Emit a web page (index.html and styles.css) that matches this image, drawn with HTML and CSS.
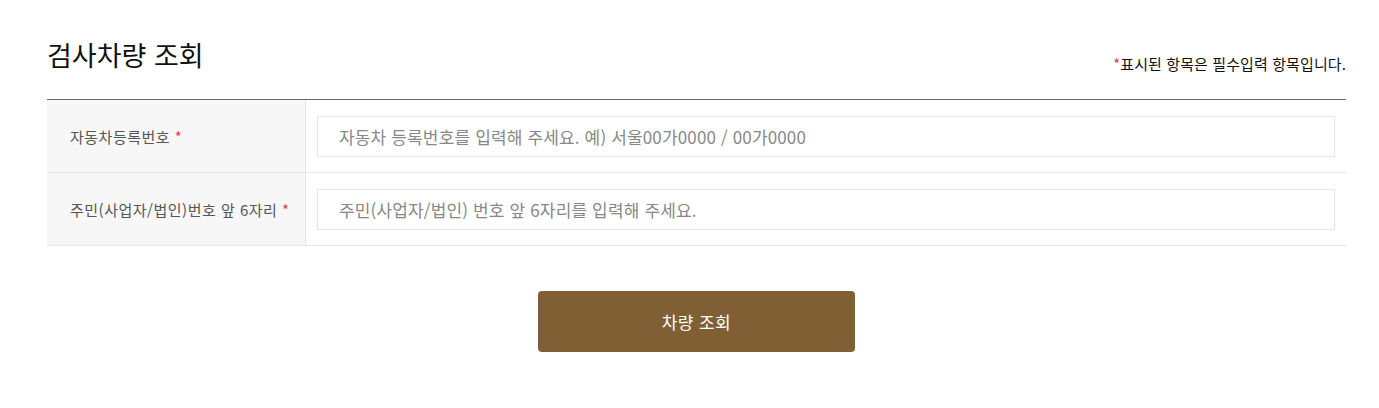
FILE: index.html
```html
<!DOCTYPE html>
<html lang="ko">
<head>
<meta charset="utf-8">
<title>검사차량 조회</title>
<link rel="stylesheet" href="styles.css">
</head>
<body>
<div class="wrap">
  <div class="head">
    <h2 class="title">검사차량 조회</h2>
    <p class="note"><span class="req">*</span>표시된 항목은 필수입력 항목입니다.</p>
  </div>
  <div class="form">
    <div class="row">
      <div class="label"><span>자동차등록번호 <span class="req">*</span></span></div>
      <div class="field"><input class="input" type="text" placeholder="자동차 등록번호를 입력해 주세요. 예) 서울00가0000 / 00가0000"></div>
    </div>
    <div class="row">
      <div class="label"><span>주민(사업자/법인)번호 앞 6자리 <span class="req">*</span></span></div>
      <div class="field"><input class="input" type="text" placeholder="주민(사업자/법인) 번호 앞 6자리를 입력해 주세요."></div>
    </div>
  </div>
  <div class="actions">
    <button class="btn" type="button">차량 조회</button>
  </div>
</div>
</body>
</html>
```
FILE: styles.css
```css
html, body {
  margin: 0;
  padding: 0;
  background: #fff;
}
body {
  font-family: "Noto Sans CJK KR", "Noto Sans", sans-serif;
  color: #222;
}
.wrap {
  padding: 0 33px 0 47px;
}
.head {
  display: flex;
  justify-content: space-between;
  align-items: flex-end;
  height: 99px;
  box-sizing: border-box;
  padding-bottom: 26px;
}
.title {
  margin: 0;
  font-size: 27px;
  font-weight: 400;
  line-height: 36px;
  color: #111;
  letter-spacing: 0;
}
.note {
  margin: 0;
  font-size: 15px;
  line-height: 18px;
  color: #111;
  letter-spacing: 0.1px;
}
.req {
  color: #e0404a;
}
.form {
  border-top: 1px solid #666;
}
.row {
  display: flex;
  border-bottom: 1px solid #e5e5e5;
}
.label {
  width: 259px;
  flex: none;
  background: #f7f7f7;
  border-right: 1px solid #e5e5e5;
  display: flex;
  align-items: center;
  padding-left: 23px;
  box-sizing: border-box;
  font-size: 15px;
  color: #555;
  letter-spacing: 0.5px;
}
.field {
  flex: 1;
  padding: 16px 11px 15px;
}
.input {
  display: block;
  width: 100%;
  height: 41px;
  box-sizing: border-box;
  border: 1px solid #e5e5e5;
  padding: 0 21px;
  font-family: inherit;
  font-size: 17px;
  color: #333;
  outline: none;
  letter-spacing: 0.15px;
}
.input::placeholder {
  color: #888;
}
.actions {
  display: flex;
  justify-content: center;
  padding-top: 45px;
}
.btn {
  width: 317px;
  height: 61px;
  border: 0;
  border-radius: 4px;
  background: #7f5f33;
  color: #fff;
  font-family: inherit;
  font-size: 17px;
  letter-spacing: 0.4px;
  cursor: pointer;
}
```
